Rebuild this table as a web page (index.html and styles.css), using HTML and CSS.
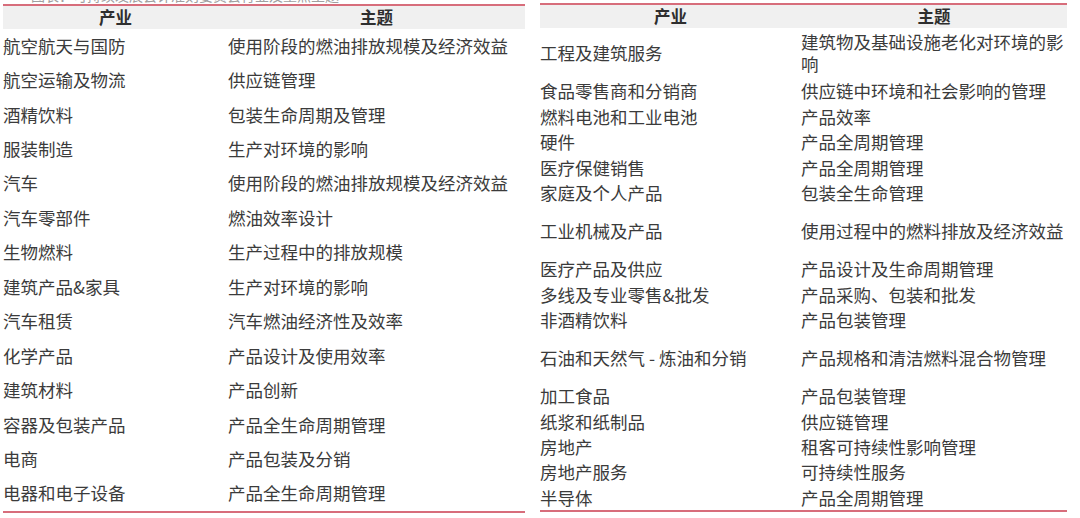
FILE: index.html
```html
<!DOCTYPE html>
<html lang="zh">
<head>
<meta charset="utf-8">
<link rel="stylesheet" href="styles.css">
</head>
<body>
<div class="page">
  <section class="tbl tbl-left">
    <div class="caption"><span class="caption-text">图表：可持续发展会计准则委员会行业及重点主题</span></div>
    <div class="rule"></div>
    <div class="grid">
      <div class="hd">产业</div><div class="hd">主题</div>
      <div class="c">航空航天与国防</div><div class="c">使用阶段的燃油排放规模及经济效益</div>
      <div class="c">航空运输及物流</div><div class="c">供应链管理</div>
      <div class="c">酒精饮料</div><div class="c">包装生命周期及管理</div>
      <div class="c">服装制造</div><div class="c">生产对环境的影响</div>
      <div class="c">汽车</div><div class="c">使用阶段的燃油排放规模及经济效益</div>
      <div class="c">汽车零部件</div><div class="c">燃油效率设计</div>
      <div class="c">生物燃料</div><div class="c">生产过程中的排放规模</div>
      <div class="c">建筑产品&amp;家具</div><div class="c">生产对环境的影响</div>
      <div class="c">汽车租赁</div><div class="c">汽车燃油经济性及效率</div>
      <div class="c">化学产品</div><div class="c">产品设计及使用效率</div>
      <div class="c">建筑材料</div><div class="c">产品创新</div>
      <div class="c">容器及包装产品</div><div class="c">产品全生命周期管理</div>
      <div class="c">电商</div><div class="c">产品包装及分销</div>
      <div class="c">电器和电子设备</div><div class="c">产品全生命周期管理</div>
    </div>
    <div class="rule"></div>
  </section>
  <section class="tbl tbl-right">
    <div class="rule"></div>
    <div class="grid">
      <div class="hd">产业</div><div class="hd">主题</div>
      <div class="c x2">工程及建筑服务</div><div class="c x2 wrap">建筑物及基础设施老化对环境的影<br>响</div>
      <div class="c">食品零售商和分销商</div><div class="c">供应链中环境和社会影响的管理</div>
      <div class="c">燃料电池和工业电池</div><div class="c">产品效率</div>
      <div class="c">硬件</div><div class="c">产品全周期管理</div>
      <div class="c">医疗保健销售</div><div class="c">产品全周期管理</div>
      <div class="c">家庭及个人产品</div><div class="c">包装全生命管理</div>
      <div class="c x2">工业机械及产品</div><div class="c x2">使用过程中的燃料排放及经济效益</div>
      <div class="c">医疗产品及供应</div><div class="c">产品设计及生命周期管理</div>
      <div class="c">多线及专业零售&amp;批发</div><div class="c">产品采购、包装和批发</div>
      <div class="c">非酒精饮料</div><div class="c">产品包装管理</div>
      <div class="c x2">石油和天然气 - 炼油和分销</div><div class="c x2">产品规格和清洁燃料混合物管理</div>
      <div class="c">加工食品</div><div class="c">产品包装管理</div>
      <div class="c">纸浆和纸制品</div><div class="c">供应链管理</div>
      <div class="c">房地产</div><div class="c">租客可持续性影响管理</div>
      <div class="c">房地产服务</div><div class="c">可持续性服务</div>
      <div class="c">半导体</div><div class="c">产品全周期管理</div>
    </div>
    <div class="rule"></div>
  </section>
</div>
</body>
</html>
```
FILE: styles.css
```css
html, body {
  margin: 0;
  padding: 0;
  background: #ffffff;
}
body {
  width: 1080px;
  height: 518px;
  overflow: hidden;
  font-family: "Noto Sans CJK SC", "Noto Sans", sans-serif;
  color: #3b3b3b;
}
.page {
  display: flex;
  gap: 15px;
  padding-left: 3px;
}
.tbl {
  display: flex;
  flex-direction: column;
}
.tbl-left {
  width: 522px;
}
.tbl-right {
  width: 527px;
  padding-top: 3px;
}
.caption {
  height: 4px;
  overflow: hidden;
  padding-left: 28px;
}
.caption-text {
  display: block;
  margin-top: -12px;
  font-size: 14px;
  line-height: 14px;
  color: #a0a0a0;
  white-space: nowrap;
}
.rule {
  height: 2px;
  background: #d76d7b;
}
.grid {
  display: grid;
}
.tbl-left .grid {
  grid-template-columns: 225px 1fr;
  grid-template-rows: 22.5px repeat(14, 34.45px);
}
.tbl-right .grid {
  grid-template-columns: 261px 1fr;
  grid-template-rows: 23px repeat(19, 25.4px);
}
.hd {
  background: #f0f0f0;
  display: flex;
  align-items: center;
  justify-content: center;
  font-size: 16.5px;
  font-weight: 700;
  color: #2e2e2e;
  line-height: 1;
}
.c {
  display: flex;
  align-items: center;
  font-size: 17.5px;
  line-height: 22px;
  white-space: nowrap;
}
.tbl-right .c.x2 {
  grid-row: span 2;
}
.wrap {
  white-space: normal;
}
```
